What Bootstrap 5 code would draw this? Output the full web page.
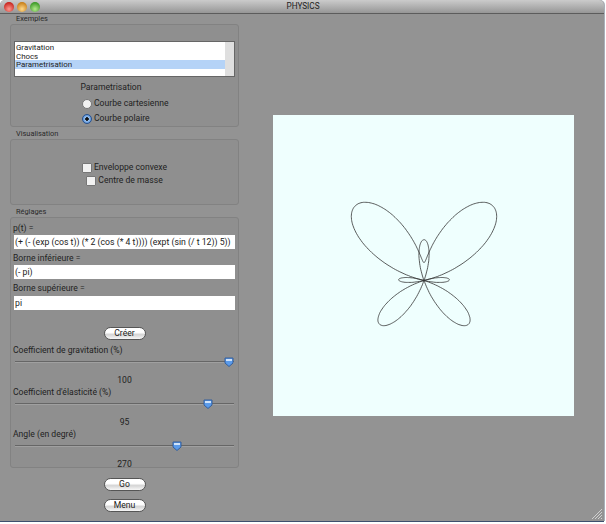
<!DOCTYPE html>
<html lang="en">
<head>
    <meta charset="UTF-8">
    <meta name="viewport" content="width=device-width, initial-scale=1.0">
    <title>PHYSICS</title>
    <link href="https://cdn.jsdelivr.net/npm/bootstrap@5.3.0/dist/css/bootstrap.min.css" rel="stylesheet">
    <style>
        html, body { height: 100%; background: #fff; }
        body { font-family: Roboto, "Liberation Sans", sans-serif; font-size: 8.6px; line-height: 11px; color: #222; overflow: hidden; }
        .app-window { width: 604px; height: 521px; background: #939393; border-radius: 5px 5px 0 0; box-shadow: 0 1px 0 #3d4f6e, 1px 0 0 #a9afb9; overflow: hidden; }
        .title-bar { height: 14px; background: linear-gradient(#cbcbcb, #969696); border-bottom: 1px solid #5c5c5c; color: #222; }
        .title-text { font-size: 8.2px; line-height: 13px; }
        .light { width: 10px; height: 10px; border-radius: 50%; }
        .light-red { background: radial-gradient(circle at 50% 70%, #ff9a90, #c8261f 75%); }
        .light-amber { background: radial-gradient(circle at 50% 70%, #ffd98a, #c9801a 75%); }
        .light-green { background: radial-gradient(circle at 50% 70%, #b4ea8c, #3d9a28 75%); }
        .left-col { width: 249px; padding: 0 10px; }
        .group-label { height: 10px; padding-left: 6px; font-size: 7.4px; line-height: 10px; color: #2a2a2a; }
        .group-box { width: 229px; border: 1px solid #828282; border-radius: 3px; background: #8f8f8f; padding: 0 3px; }
        .box-examples { height: 103px; padding-top: 16px; margin-bottom: 2px; }
        .box-visu { height: 66px; padding-top: 22px; margin-bottom: 2px; }
        .box-reglages { height: 251px; padding-top: 5px; }
        .pick-list { height: 36px; background: #fff; border: 1px solid #666; }
        .pick-rows { padding-top: 1px; color: #222; }
        .pick-rows .list-group-item { height: 9px; background: transparent; border: 0; padding: 0 0 0 1px; font-size: 7.9px; line-height: 9px; color: #222; border-radius: 0; }
        .pick-rows .list-group-item.active { background: #b5d3f7; color: #222; }
        .pick-scroll { width: 9px; background: #dfdfdf; }
        .param-title { margin-top: 5px; padding-right: 27px; }
        .tick { width: 10px; height: 10px; background: #f2f2f2; border: 1px solid #777; }
        .tick-round { border-radius: 50%; }
        .tick-on { background: radial-gradient(circle, #111 0 1.5px, #9cc4f2 2px, #2f6fc0 100%); border-color: #27528f; }
        .tick-square { border-radius: 1px; }
        .field-label { height: 10px; line-height: 10px; margin-left: -1px; }
        .field-input.form-control { height: 14px; min-height: 0; padding: 0 1px; font-size: 8.7px; line-height: 13px; border: 0; border-radius: 0; color: #222; background: #fff; font-family: inherit; }
        .mac-btn.btn { width: 42px; height: 13px; padding: 0; font-size: 8.6px; line-height: 11px; color: #222; background: linear-gradient(#fff 40%, #d5d5d5 60%, #f7f7f7); border: 1px solid #555; border-radius: 7px; }
        .slider-track { height: 2px; margin: 0 1px; background: #666; border-bottom: 1px solid #a0a0a0; }
        .slider-thumb { position: absolute; top: -4px; width: 10px; height: 10px; margin-left: -5px; }
        .slider-wrap { height: 20px; padding-top: 6px; }
        .slider-value { height: 10px; line-height: 10px; }
        .canvas-area { width: 301px; height: 301px; background: #effffe; margin: 101px 0 0 24px; }
        .grip { position: absolute; right: 1px; bottom: 1px; }
    </style>
</head>

<body>
    <div class="app-window d-flex flex-column position-relative">
        <div class="title-bar d-flex position-relative flex-shrink-0">
            <div class="d-flex ps-1 align-items-center" style="gap:3px;padding-top:1px">
                <span class="light light-red"></span>
                <span class="light light-amber"></span>
                <span class="light light-green"></span>
            </div>
            <div class="title-text flex-grow-1 text-center" style="margin-left:-38px">PHYSICS</div>
        </div>

        <div class="d-flex">
            <div class="left-col flex-shrink-0">
                <div class="group-label">Exemples</div>
                <div class="group-box box-examples">
                    <div class="pick-list d-flex">
                        <div class="list-group pick-rows flex-grow-1">
                            <div class="list-group-item">Gravitation</div>
                            <div class="list-group-item">Chocs</div>
                            <div class="list-group-item active">Parametrisation</div>
                        </div>
                        <div class="pick-scroll"></div>
                    </div>
                    <div class="param-title text-center">Parametrisation</div>
                    <div class="d-flex flex-column" style="gap:4px;margin:5px 0 0 68px">
                        <div class="d-flex align-items-center" style="gap:2px"><span class="tick tick-round"></span>Courbe cartesienne</div>
                        <div class="d-flex align-items-center" style="gap:2px"><span class="tick tick-round tick-on"></span>Courbe polaire</div>
                    </div>
                </div>

                <div class="group-label">Visualisation</div>
                <div class="group-box box-visu d-flex flex-column align-items-center" style="gap:2px">
                    <div class="d-flex align-items-center" style="gap:2px"><span class="tick tick-square"></span>Enveloppe convexe</div>
                    <div class="d-flex align-items-center" style="gap:2px"><span class="tick tick-square"></span>Centre de masse</div>
                </div>

                <div class="group-label">Réglages</div>
                <div class="group-box box-reglages">
                    <div class="field-label">p(t) =</div>
                    <input class="form-control field-input" style="margin-top:2px" value="(+ (- (exp (cos t)) (* 2 (cos (* 4 t)))) (expt (sin (/ t 12)) 5))">
                    <div class="field-label" style="margin-top:4px">Borne inférieure =</div>
                    <input class="form-control field-input" style="margin-top:2px" value="(- pi)">
                    <div class="field-label" style="margin-top:4px">Borne supérieure =</div>
                    <input class="form-control field-input" style="margin-top:3px" value="pi">
                    <div class="text-center" style="margin-top:17px"><button class="btn mac-btn d-block mx-auto">Créer</button></div>

                    <div class="field-label" style="margin-top:5px">Coefficient de gravitation (%)</div>
                    <div class="slider-wrap"><div class="slider-track position-relative" data-pos="214"></div></div>
                    <div class="slider-value text-center">100</div>
                    <div class="field-label" style="margin-top:2px">Coefficient d'élasticité (%)</div>
                    <div class="slider-wrap"><div class="slider-track position-relative" data-pos="193"></div></div>
                    <div class="slider-value text-center">95</div>
                    <div class="field-label" style="margin-top:2px">Angle (en degré)</div>
                    <div class="slider-wrap"><div class="slider-track position-relative" data-pos="162"></div></div>
                    <div class="slider-value text-center">270</div>
                </div>

                <div class="d-flex flex-column align-items-center" style="gap:8px;margin-top:10px">
                    <button class="btn mac-btn">Go</button>
                    <button class="btn mac-btn">Menu</button>
                </div>
            </div>

            <div class="canvas-area flex-shrink-0">
                <svg id="curve" class="d-block" width="301" height="301" viewBox="0 0 301 301"><path fill="none" stroke="#333" stroke-width="0.8"></path></svg>
            </div>
        </div>

        <svg class="grip" width="12" height="12" viewBox="0 0 12 12">
            <path d="M1 11 11 1M4 11 11 4M7 11 11 7M10 11 11 10" stroke="#d0d0d0" stroke-width="1" fill="none"></path>
        </svg>
    </div>

    <script>
        // butterfly curve, same expression as the p(t) field
        let d = '';
        for (let i = 0; i <= 600; i++) {
            let t = -Math.PI + 2 * Math.PI * i / 600;
            let r = Math.exp(Math.cos(t)) - 2 * Math.cos(4 * t) + Math.pow(Math.sin(t / 12), 5);
            let x = 151 + 25 * r * Math.sin(t);
            let y = 165.5 - 25 * r * Math.cos(t);
            d += (i ? 'L' : 'M') + x.toFixed(1) + ' ' + y.toFixed(1);
        }
        document.querySelector('#curve path').setAttribute('d', d);

        document.querySelectorAll('.slider-track').forEach(function (track) {
            track.innerHTML = '<svg class="slider-thumb" style="left:' + track.dataset.pos + 'px" viewBox="0 0 10 10"><path d="M1 1h8v5l-4 3.5L1 6z" fill="#5b9bea" stroke="#345f9c" stroke-width="1"/><path d="M2 2h6v2H2z" fill="#cfe3fb"/></svg>';
        });
    </script>
    <script src="https://cdn.jsdelivr.net/npm/bootstrap@5.3.0/dist/js/bootstrap.bundle.min.js"></script>
</body>
</html>
